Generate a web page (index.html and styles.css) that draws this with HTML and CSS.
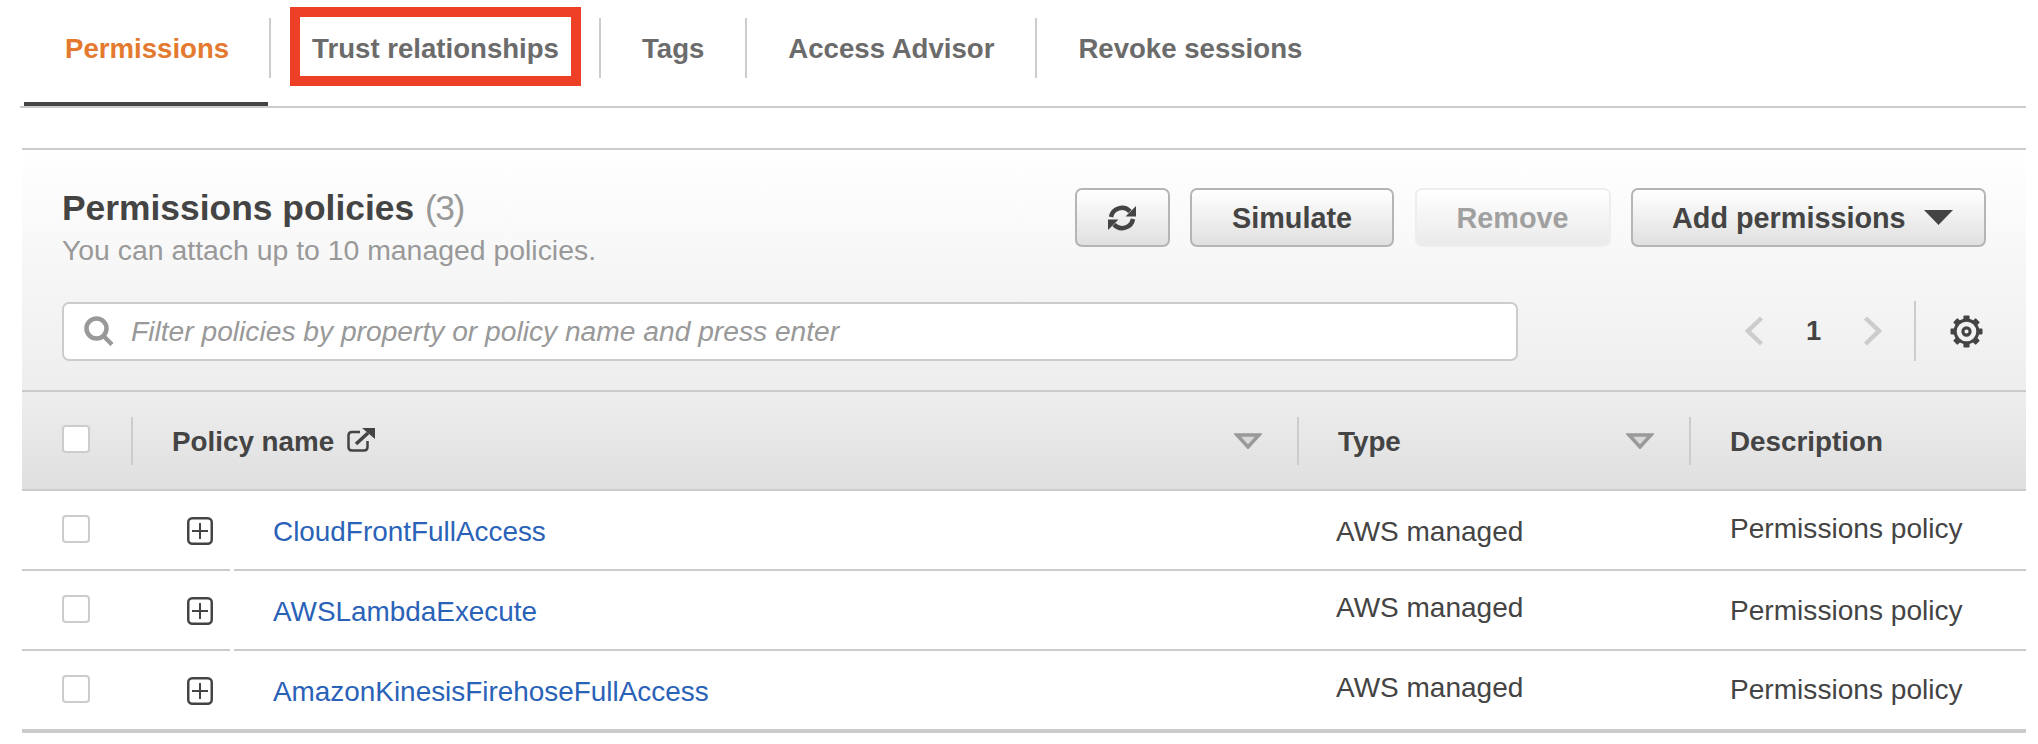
FILE: index.html
```html
<!DOCTYPE html>
<html lang="en">
<head>
<meta charset="utf-8">
<title>Permissions</title>
<link rel="stylesheet" href="styles.css">
</head>
<body>
<nav class="tabs">
  <a class="tab tab-active">Permissions</a>
  <a class="tab tab-marked">Trust relationships</a>
  <a class="tab">Tags</a>
  <a class="tab">Access Advisor</a>
  <a class="tab tab-last">Revoke sessions</a>
</nav>
<section class="panel">
  <div class="panel-top">
    <div class="head-row">
      <div class="title-block">
        <h2 class="title">Permissions policies <span class="count">(3)</span></h2>
        <p class="subtitle">You can attach up to 10 managed policies.</p>
      </div>
      <div class="actions">
        <button class="btn btn-icon" aria-label="Refresh">
          <svg class="icon-refresh" viewBox="0 0 28 28" width="28" height="28">
            <path d="M3 13 A11 11 0 0 1 22 7.5" fill="none" stroke="#444" stroke-width="4.500"/>
            <path d="M28 2 V12.500 H17.500 Z" fill="#444"/>
            <path d="M25 15 A11 11 0 0 1 6 20.500" fill="none" stroke="#444" stroke-width="4.500"/>
            <path d="M0 26 V15.500 H10.500 Z" fill="#444"/>
          </svg>
        </button>
        <button class="btn btn-simulate">Simulate</button>
        <button class="btn btn-remove" disabled>Remove</button>
        <button class="btn btn-add">Add permissions
          <svg class="icon-caret" viewBox="0 0 29 15" width="29" height="15"><path d="M0 0 H29 L14.500 15 Z" fill="#444"/></svg>
        </button>
      </div>
    </div>
    <div class="filter-row">
      <div class="search">
        <svg class="icon-search" viewBox="0 0 30 30" width="30" height="30">
          <circle cx="12.500" cy="12.500" r="10" fill="none" stroke="#999" stroke-width="4.500"/>
          <path d="M19.500 20 L28 28.500" stroke="#999" stroke-width="4.500" fill="none"/>
        </svg>
        <span class="placeholder">Filter policies by property or policy name and press enter</span>
      </div>
      <div class="pager">
        <svg class="chev" viewBox="0 0 19 30" width="19" height="30"><path d="M16.500 2 L3 15 L16.500 28" fill="none" stroke="#ccc" stroke-width="4.500"/></svg>
        <span class="page-num">1</span>
        <svg class="chev" viewBox="0 0 19 30" width="19" height="30"><path d="M2.500 2 L16 15 L2.500 28" fill="none" stroke="#ccc" stroke-width="4.500"/></svg>
        <span class="pager-sep"></span>
        <svg class="icon-gear" viewBox="0 0 32 32" width="33" height="33">
          <circle cx="16" cy="16" r="11" fill="none" stroke="#444" stroke-width="3"/>
          <circle cx="16" cy="16" r="3.500" fill="none" stroke="#444" stroke-width="3"/>
          <g fill="#444">
            <rect x="13" y="0.500" width="6" height="5" rx="1"/>
            <rect x="13" y="26.500" width="6" height="5" rx="1"/>
            <rect x="0.500" y="13" width="5" height="6" rx="1"/>
            <rect x="26.500" y="13" width="5" height="6" rx="1"/>
            <rect x="13" y="0.500" width="6" height="5" rx="1" transform="rotate(45 16 16)"/>
            <rect x="13" y="26.500" width="6" height="5" rx="1" transform="rotate(45 16 16)"/>
            <rect x="0.500" y="13" width="5" height="6" rx="1" transform="rotate(45 16 16)"/>
            <rect x="26.500" y="13" width="5" height="6" rx="1" transform="rotate(45 16 16)"/>
          </g>
        </svg>
      </div>
    </div>
  </div>
  <div class="table">
    <div class="thead">
      <div class="th th-check"><span class="check"></span></div>
      <div class="th th-name">
        <span class="th-label">Policy name</span>
        <svg class="icon-ext" viewBox="0 0 28 24" width="28" height="24">
          <path d="M13 4 H5 Q1.500 4 1.500 7.500 V19 Q1.500 22.500 5 22.500 H17 Q20.500 22.500 20.500 19 V13" fill="none" stroke="#444" stroke-width="2.500"/>
          <path d="M9 16 L21 5" fill="none" stroke="#444" stroke-width="3.500"/>
          <path d="M15 0 H28 V11 Z" fill="#444"/>
        </svg>
        <svg class="icon-sort" viewBox="0 0 28 16" width="28" height="16"><path d="M3 2 H25 L14 14 Z" fill="#d8d8d8" stroke="#999" stroke-width="3.500"/></svg>
      </div>
      <div class="th th-type">
        <span class="th-label">Type</span>
        <svg class="icon-sort" viewBox="0 0 28 16" width="28" height="16"><path d="M3 2 H25 L14 14 Z" fill="#d8d8d8" stroke="#999" stroke-width="3.500"/></svg>
      </div>
      <div class="th th-desc"><span class="th-label">Description</span></div>
    </div>

    <div class="row">
      <div class="row-lead">
        <span class="check"></span>
        <svg class="icon-expand" viewBox="0 0 26 28" width="26" height="28"><rect x="1.250" y="1.250" width="23.500" height="25.500" rx="4" fill="none" stroke="#444" stroke-width="2.500"/><path d="M5 14 H21 M13 6 V22" stroke="#444" stroke-width="2" fill="none"/></svg>
      </div>
      <div class="row-main">
        <a class="cell-name lift-3">CloudFrontFullAccess</a>
        <span class="cell-type lift-3">AWS managed</span>
        <span class="cell-desc drop-2">Permissions policy</span>
      </div>
    </div>
    <div class="row">
      <div class="row-lead">
        <span class="check"></span>
        <svg class="icon-expand" viewBox="0 0 26 28" width="26" height="28"><rect x="1.250" y="1.250" width="23.500" height="25.500" rx="4" fill="none" stroke="#444" stroke-width="2.500"/><path d="M5 14 H21 M13 6 V22" stroke="#444" stroke-width="2" fill="none"/></svg>
      </div>
      <div class="row-main">
        <a class="cell-name lift-3">AWSLambdaExecute</a>
        <span class="cell-type drop-4">AWS managed</span>
        <span class="cell-desc lift-1">Permissions policy</span>
      </div>
    </div>
    <div class="row row-last">
      <div class="row-lead">
        <span class="check"></span>
        <svg class="icon-expand" viewBox="0 0 26 28" width="26" height="28"><rect x="1.250" y="1.250" width="23.500" height="25.500" rx="4" fill="none" stroke="#444" stroke-width="2.500"/><path d="M5 14 H21 M13 6 V22" stroke="#444" stroke-width="2" fill="none"/></svg>
      </div>
      <div class="row-main">
        <a class="cell-name lift-3">AmazonKinesisFirehoseFullAccess</a>
        <span class="cell-type drop-4">AWS managed</span>
        <span class="cell-desc">Permissions policy</span>
      </div>
    </div>
  </div>
</section>
</body>
</html>
```

FILE: styles.css
```css
* , *::after { box-sizing: border-box; }
html, body { margin: 0; padding: 0; background: #fff; }
body {
  width: 2038px;
  height: 744px;
  overflow: hidden;
  font-family: "Liberation Sans", Arial, sans-serif;
  color: #444;
}

/* Tabs */
.tabs {
  display: flex;
  height: 108px;
  margin: 0 12px 0 20px;
  padding: 18px 0 0 4px;
  border-bottom: 2px solid #ccc;
}
.tab {
  position: relative;
  display: flex;
  align-items: center;
  height: 60px;
  padding: 2px 41px 0;
  border-right: 2px solid #ccc;
  font-size: 27.6px;
  font-weight: 700;
  color: #6b6b6b;
  white-space: nowrap;
}
.tab-last { border-right: 0; }
.tab-active { padding-right: 40px; color: #e47a2f; }
.tab-active::after {
  content: "";
  position: absolute;
  left: 0;
  right: 1px;
  top: 84px;
  height: 4px;
  background: #444;
}
.tab-marked { padding-right: 40px; }
.tab-marked::after {
  content: "";
  position: absolute;
  left: 19px;
  right: 18px;
  top: -11px;
  height: 79px;
  border: 10px solid #ed4026;
}

/* Panel */
.panel {
  margin: 40px 12px 0 22px;
  border-top: 2px solid #ccc;
}
.panel-top {
  height: 242px;
  padding: 38px 40px 0 40px;
  background: linear-gradient(#fff, #eee);
  border-bottom: 2px solid #ccc;
}
.head-row {
  display: flex;
  justify-content: space-between;
  height: 59px;
}
.title-block { margin-top: 2px; }
.title {
  margin: 0;
  font-size: 35.4px;
  line-height: 36px;
  font-weight: 700;
  color: #444;
}
.count { margin-left: 1px; letter-spacing: -1.500px; font-weight: 400; color: #999; }
.subtitle {
  margin: 8px 0 0;
  font-size: 28.4px;
  line-height: 32px;
  color: #999;
}
.actions { display: flex; gap: 20.500px; }
.btn {
  display: flex;
  align-items: center;
  justify-content: center;
  height: 59px;
  padding: 2px 0 0;
  border: 2px solid #b5b5b5;
  border-radius: 7px;
  background: linear-gradient(#fff, #e0e0e0);
  font-family: inherit;
  font-size: 28.8px;
  font-weight: 700;
  color: #444;
}
.btn-icon { width: 95px; padding-top: 0; }
.btn-simulate { width: 204px; }
.btn-remove {
  width: 196px;
  border-color: #eee;
  background: linear-gradient(#fff, #eaeaea);
  color: #a0a0a0;
}
.btn-add { width: 355px; padding-left: 39px; justify-content: flex-start; gap: 18px; }
.icon-caret { margin-top: -2px; }

/* Filter row */
.filter-row {
  display: flex;
  align-items: center;
  height: 60px;
  margin-top: 54px;
}
.search {
  display: flex;
  align-items: center;
  width: 1456px;
  height: 59px;
  padding-left: 20px;
  background: #fff;
  border: 2px solid #ccc;
  border-radius: 7px;
}
.placeholder {
  margin-left: 17px;
  font-size: 28.2px;
  font-style: italic;
  color: #999;
}
.pager {
  display: flex;
  align-items: center;
  margin-left: 227px;
}
.page-num {
  width: 15px;
  margin: 0 42px 0 42px;
  font-size: 27.400px;
  font-weight: 700;
  color: #444;
}
.pager-sep {
  width: 2px;
  height: 60px;
  margin: 0 34px 0 32px;
  background: #ccc;
}

/* Table */
.thead {
  display: grid;
  grid-template-columns: 109px 1166px 392px 1fr;
  align-items: center;
  height: 99px;
  background: linear-gradient(#eee, #dfdfdf);
  border-bottom: 2px solid #ccc;
}
.th {
  display: flex;
  align-items: center;
  height: 48px;
}
.th-check { padding-left: 40px; }
.th-check .check { margin-top: -3px; }
.th-name, .th-type, .th-desc {
  padding-left: 39px;
  border-left: 2px solid #ccc;
}
.th-label {
  padding-top: 2px;
  font-size: 27.8px;
  font-weight: 700;
  color: #444;
}
.th-name .icon-ext { margin-left: 13px; margin-top: -2px; }
.icon-sort { margin-left: auto; margin-right: 35px; }
.check {
  display: block;
  flex: none;
  width: 28px;
  height: 28px;
  background: #fff;
  border: 2px solid #ccc;
  border-radius: 4px;
}
.row {
  display: flex;
  height: 80px;
}
.row-lead {
  display: flex;
  align-items: center;
  flex: none;
  width: 208px;
  padding-left: 40px;
  border-bottom: 2px solid #ccc;
}
.row-lead .check { margin-top: -2px; }
.icon-expand { margin: 2px 0 0 97px; }
.row-main {
  display: flex;
  align-items: center;
  flex: 1;
  margin-left: 4px;
  padding-left: 39px;
  border-bottom: 2px solid #ccc;
  font-size: 28px;
  color: #444;
}
.row-last { height: 82px; }
.row-last .row-lead,
.row-last .row-main { border-bottom-width: 4px; }
.row-last .row-main { margin-left: 0; padding-left: 43px; }
.cell-name {
  flex: none;
  width: 1063px;
  font-size: 27.900px;
  color: #2a62b8;
  white-space: nowrap;
}
.cell-type { flex: none; width: 394px; white-space: nowrap; }
.cell-desc { font-size: 28.100px; white-space: nowrap; }
.lift-3 { padding-top: 3px; }
.lift-1 { padding-top: 1px; }
.drop-4 { padding-bottom: 4px; }
.drop-2 { padding-bottom: 2px; }
```
